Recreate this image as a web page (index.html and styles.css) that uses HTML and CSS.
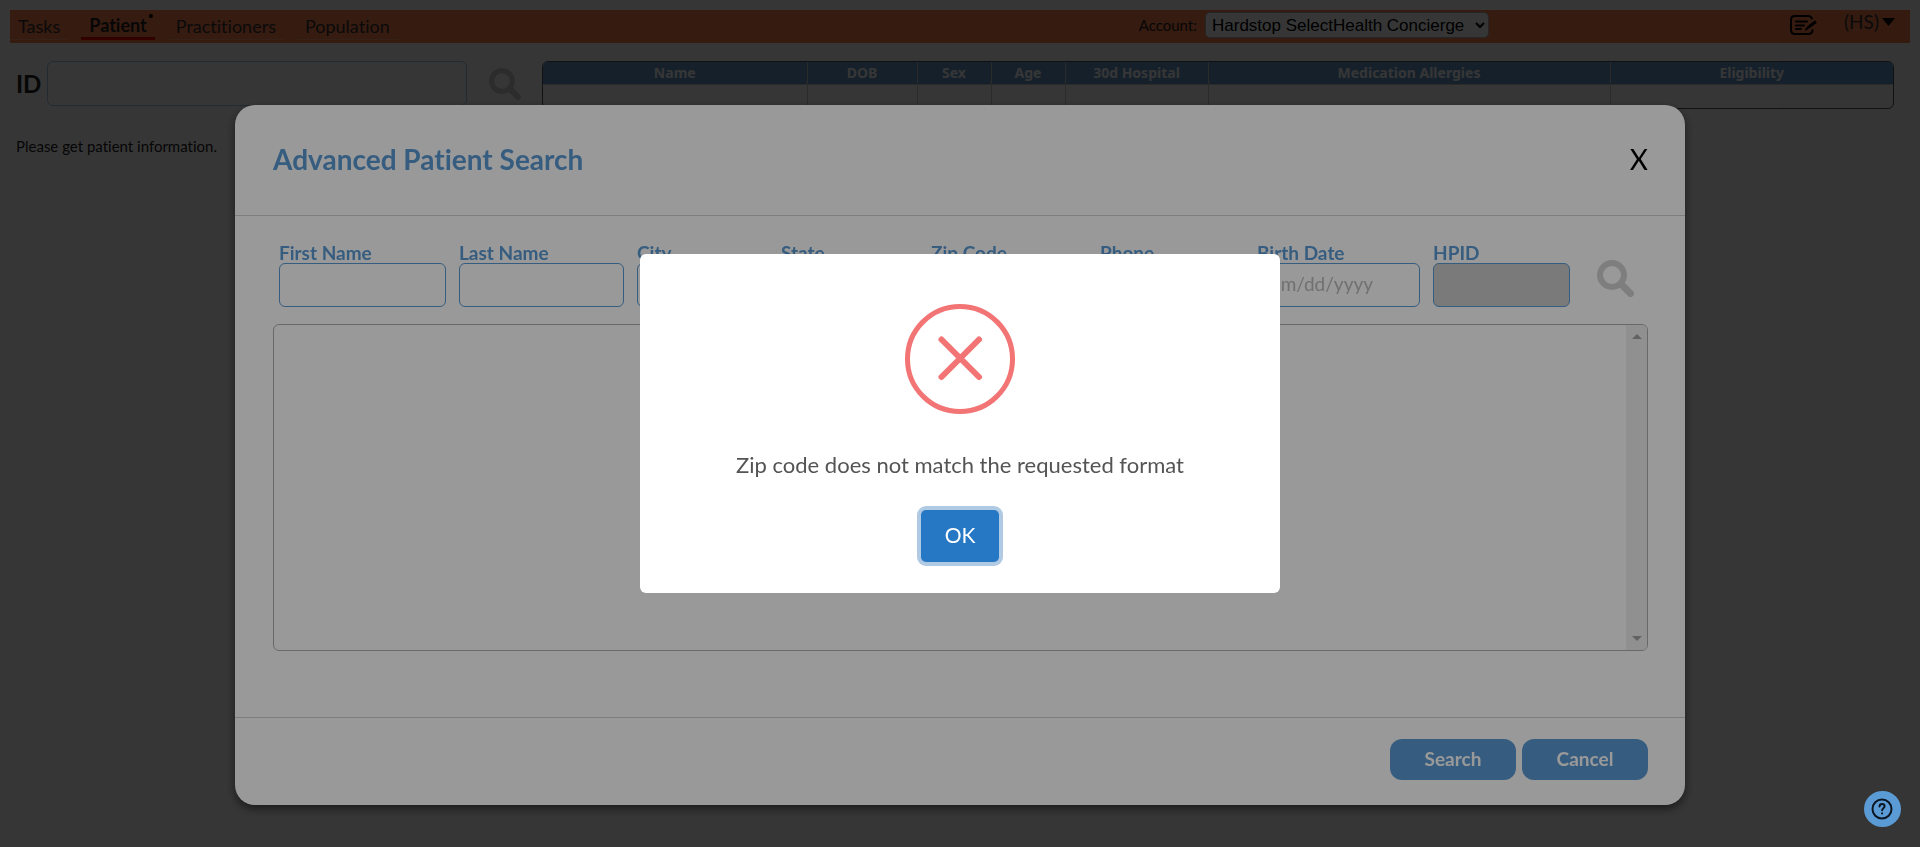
FILE: index.html
```html
<!DOCTYPE html>
<html lang="en">
<head>
<meta charset="utf-8">
<title>Advanced Patient Search</title>
<link rel="stylesheet" href="styles.css">
</head>
<body>
<header class="topbar">
  <nav class="nav">
    <a class="nav-link" href="#">Tasks</a>
    <a class="nav-link nav-link-active" href="#">Patient<span class="nav-dot"></span></a>
    <a class="nav-link" href="#">Practitioners</a>
    <a class="nav-link" href="#">Population</a>
  </nav>
  <div class="account">
    <label class="account-label" for="account">Account:</label>
    <select class="account-select" id="account"><option>Hardstop SelectHealth Concierge</option></select>
  </div>
  <div class="tools">
    <button class="icon-button" type="button" aria-label="Notes">
      <svg width="28" height="20" viewBox="0 0 28 20" fill="none" stroke="#000" stroke-width="2" stroke-linecap="round">
        <path d="M22 3.500C21 1.500 20 1 18 1H5C2.500 1 1 2.500 1 5v9.500C1 17.500 2.500 19 5 19h13c3 0 4.500-1.500 4.500-4"/>
        <path d="M6 6.500h11M6 10.500h8M6 14h5"/>
        <path d="M26 6.500l-8 6" stroke-width="3" stroke-linecap="butt"/><path d="M18.500 12l-2.500 2.500"/>
      </svg>
    </button>
    <button class="user-menu" type="button">(HS)<svg width="13" height="8" viewBox="0 0 13 8"><path d="M0 0h13L6.500 8z" fill="#000"/></svg></button>
  </div>
</header>
<main class="patient">
  <form class="id-search">
    <label class="id-label" for="pid">ID</label>
    <input class="id-input" id="pid" type="text">
    <button class="icon-button id-button" type="button" aria-label="Search">
      <svg width="32" height="32" viewBox="0 0 37 37" fill="none" stroke="#d0d0d0" stroke-linecap="round"><circle cx="15" cy="15" r="12" stroke-width="6"/><path d="M25.500 25.500l8 8" stroke-width="7"/></svg>
      <span class="id-more"></span>
    </button>
  </form>
  <div class="patient-table-wrap">
    <table class="patient-table">
      <colgroup><col class="c-name"><col class="c-dob"><col class="c-sex"><col class="c-sex"><col class="c-hosp"><col class="c-med"><col></colgroup>
      <thead><tr><th>Name</th><th>DOB</th><th>Sex</th><th>Age</th><th>30d Hospital</th><th>Medication Allergies</th><th>Eligibility</th></tr></thead>
      <tbody><tr><td></td><td></td><td></td><td></td><td></td><td></td><td></td></tr></tbody>
    </table>
  </div>
</main>
<p class="hint">Please get patient information.</p>

<div class="overlay modal-overlay">
  <section class="modal" role="dialog" aria-labelledby="modal-title">
    <header class="modal-header">
      <h2 class="modal-title" id="modal-title">Advanced Patient Search</h2>
      <button class="modal-close" type="button">X</button>
    </header>
    <div class="modal-body">
      <form class="fields">
        <div class="field"><label for="first">First Name</label><input id="first" type="text"></div>
        <div class="field"><label for="last">Last Name</label><input id="last" type="text"></div>
        <div class="field"><label for="city">City</label><input id="city" type="text"></div>
        <div class="field"><label for="state">State</label><input id="state" type="text"></div>
        <div class="field"><label for="zip">Zip Code</label><input id="zip" type="text"></div>
        <div class="field"><label for="phone">Phone</label><input id="phone" type="text"></div>
        <div class="field"><label for="birth">Birth Date</label><input id="birth" type="text" placeholder="mm/dd/yyyy"></div>
        <div class="field"><label for="hpid">HPID</label><input id="hpid" type="text" disabled></div>
        <button class="icon-button field-search" type="button" aria-label="Search patients">
          <svg width="37" height="37" viewBox="0 0 37 37" fill="none" stroke="#d3d3d3" stroke-linecap="round"><circle cx="15" cy="15" r="12" stroke-width="6"/><path d="M26 26l7.500 7.500" stroke-width="7"/></svg>
        </button>
      </form>
      <div class="results">
        <div class="results-scroll">
          <svg width="10" height="5" viewBox="0 0 10 5"><path d="M5 0l5 5H0z" fill="#a3a3a3"/></svg>
          <svg width="10" height="5" viewBox="0 0 10 5"><path d="M5 5L0 0h10z" fill="#a3a3a3"/></svg>
        </div>
      </div>
    </div>
    <footer class="modal-footer">
      <button class="action" type="button">Search</button>
      <button class="action" type="button">Cancel</button>
    </footer>
  </section>
</div>

<div class="overlay alert-overlay">
  <section class="alert" role="alertdialog" aria-labelledby="alert-text">
    <svg class="alert-icon" width="110" height="110" viewBox="0 0 110 110" fill="none" stroke="#f27474" stroke-width="5"><circle cx="55" cy="55" r="52.500"/><path d="M36.500 35.500l37.500 37.500M74 35.500L36.500 73" stroke-width="6" stroke-linecap="round"/></svg>
    <p class="alert-text" id="alert-text">Zip code does not match the requested format</p>
    <button class="alert-ok" type="button">OK</button>
  </section>
</div>

<button class="help" type="button" aria-label="Help">
  <svg width="22" height="22" viewBox="0 0 22 22" fill="none" stroke="#0b1622" stroke-width="2" stroke-linecap="round" stroke-linejoin="round"><circle cx="11" cy="11" r="9.500"/><path d="M8.500 8.500C8.600 6.800 9.700 6 11 6s2.600.9 2.600 2.300c0 1.800-2.500 2-2.500 4"/><path d="M11.100 15.300v.2"/></svg>
</button>
</body>
</html>
```
FILE: styles.css
```css
* { box-sizing: border-box; }
html, body { height: 100%; }
body {
  margin: 0;
  padding: 10px;
  background: #fff;
  color: #222;
  font-family: Lato, "Open Sans", sans-serif;
  font-variant-ligatures: none;
  overflow: hidden;
}
button { font-family: inherit; cursor: pointer; }
svg { display: block; flex: none; }

.topbar { display: flex; align-items: flex-start; height: 33px; background: #ff7f50; }
.nav { display: flex; gap: 13px; flex: 1; }
.nav-link {
  position: relative;
  height: 30px;
  padding: 4px 8px 0;
  border-bottom: 1px solid #ff9a78;
  color: #333;
  font-size: 18px;
  line-height: 24px;
  text-decoration: none;
}
.nav-link-active { padding-top: 3px; color: #222; font-weight: 700; border-bottom: 3px solid #f00000; }
.nav-dot { position: absolute; top: 4px; right: 2px; width: 4px; height: 4px; border-radius: 50%; background: #000; }
.account { display: flex; align-items: center; gap: 8px; padding-top: 2px; }
.account-label { font-size: 15px; line-height: 26px; color: #222; }
.account-select {
  width: 284px;
  height: 26px;
  padding: 0 2px;
  border: 1px solid #a8b4be;
  border-radius: 5px;
  background-color: #fff;
  color: #000;
  font: 17px/24px "Liberation Sans", Arial, sans-serif;
}
.tools { display: flex; align-items: flex-start; justify-content: flex-end; gap: 26px; width: 421px; padding: 5px 15px 0 0; }
.icon-button { position: relative; padding: 0; border: 0; background: none; }
.user-menu {
  display: flex;
  align-items: center;
  gap: 3px;
  margin-top: -5px;
  padding: 0;
  border: 0;
  background: none;
  color: #333;
  font-size: 19px;
  line-height: 24px;
}

.patient { display: flex; align-items: flex-start; padding: 18px 16px 0 6px; }
.id-search { display: flex; align-items: center; width: 526px; }
.id-label { width: 31px; font-size: 24px; font-weight: 700; }
.id-input { width: 420px; height: 45px; border: 1px solid #a7c8e6; border-radius: 6px; background: #fff; }
.id-button { margin-left: 22px; }
.id-more { position: absolute; top: 37px; left: 8px; width: 16px; height: 16px; border-radius: 3px; background: #5b9bd5; }
.patient-table-wrap { flex: 1; border: 1px solid #555; border-radius: 6px; overflow: hidden; }
.patient-table { width: 100%; border-collapse: collapse; table-layout: fixed; }
.patient-table th {
  height: 22px;
  padding: 0;
  border-right: 1px solid #c4c4c4;
  background: #6399cc;
  color: #fff;
  font: 700 14px/22px "Noto Sans", "Open Sans", sans-serif;
}
.patient-table td { height: 23px; padding: 0; border-right: 1px solid #ccc; border-top: 1px solid #ccc; }
.patient-table th:last-child, .patient-table td:last-child { border-right: 0; }
.c-name { width: 264px; }
.c-dob { width: 110px; }
.c-sex { width: 74px; }
.c-hosp { width: 143px; }
.c-med { width: 402px; }
.hint { margin: 27px 6px; font-size: 15px; line-height: 20px; }

.overlay { position: fixed; inset: 0; display: flex; }
.modal-overlay { padding: 105px 235px 42px; background: rgba(0, 0, 0, .65); }
.modal {
  display: flex;
  flex: 1;
  flex-direction: column;
  border-radius: 20px;
  background: #fff;
  box-shadow: 0 4px 8px rgba(0, 0, 0, .5);
}
.modal-header {
  display: flex;
  align-items: center;
  justify-content: space-between;
  height: 111px;
  padding: 0 37px 2px 38px;
  border-bottom: 1px solid #d3d3d3;
}
.modal-title { margin: 0; color: #5b9bd5; font-size: 28px; line-height: 32px; }
.modal-close { padding: 0; border: 0; background: none; color: #000; font-size: 28px; line-height: 32px; }
.modal-body { display: flex; flex: 1; flex-direction: column; padding: 26px 37px 66px 38px; }
.fields {
  display: grid;
  grid-template-columns: 167fr 165fr 131fr 137fr 156fr 144fr 163fr 137fr 65fr;
  gap: 13px;
  padding-left: 6px;
}
.field { display: flex; min-width: 0; flex-direction: column; color: #5b9bd5; font-size: 19px; font-weight: 700; line-height: 21px; }
.field input {
  width: 100%;
  height: 44px;
  padding: 0 7px 4px;
  border: 1px solid #5b9bd5;
  border-radius: 6px;
  background: #fff;
  font: 19px Lato, "Open Sans", sans-serif;
}
.field input::placeholder { color: #bbb; }
.field input:disabled { background: #ccc; }
.field-search { align-self: start; padding: 18px 0 0 14px; }
.results { display: flex; flex: 1; justify-content: flex-end; margin-top: 17px; border: 1px solid #b0b0b0; border-radius: 6px; overflow: hidden; }
.results-scroll { display: flex; flex-direction: column; align-items: center; justify-content: space-between; width: 21px; padding: 9px 0; background: #f1f1f1; }
.modal-footer { display: flex; justify-content: flex-end; gap: 6px; height: 88px; padding: 21px 37px 0; border-top: 1px solid #d3d3d3; }
.action { width: 126px; height: 41px; padding: 0 0 2px; border: 0; border-radius: 12px; background: #5b9bd5; color: #fff; font-size: 19px; font-weight: 700; }

.alert-overlay { align-items: center; justify-content: center; background: rgba(0, 0, 0, .4); }
.alert {
  display: flex;
  flex-direction: column;
  align-items: center;
  width: 640px;
  max-width: 100%;
  padding: 50px 20px 31px;
  border-radius: 6px;
  background: #fff;
}
.alert-text { margin: 36px 0 30px; color: #545454; font-size: 22px; line-height: 30px; }
.alert-ok {
  width: 78px;
  height: 52px;
  padding: 0 0 4px;
  border: 0;
  border-radius: 5px;
  background: #2778c4;
  box-shadow: 0 0 0 4px #b1cae4;
  color: #fff;
  font-size: 21px;
}
.help {
  position: fixed;
  right: 19px;
  bottom: 20px;
  display: flex;
  align-items: center;
  justify-content: center;
  width: 37px;
  height: 36px;
  padding: 0 1px 0 0;
  border: 0;
  border-radius: 50%;
  background: #5b9bd5;
}
```
